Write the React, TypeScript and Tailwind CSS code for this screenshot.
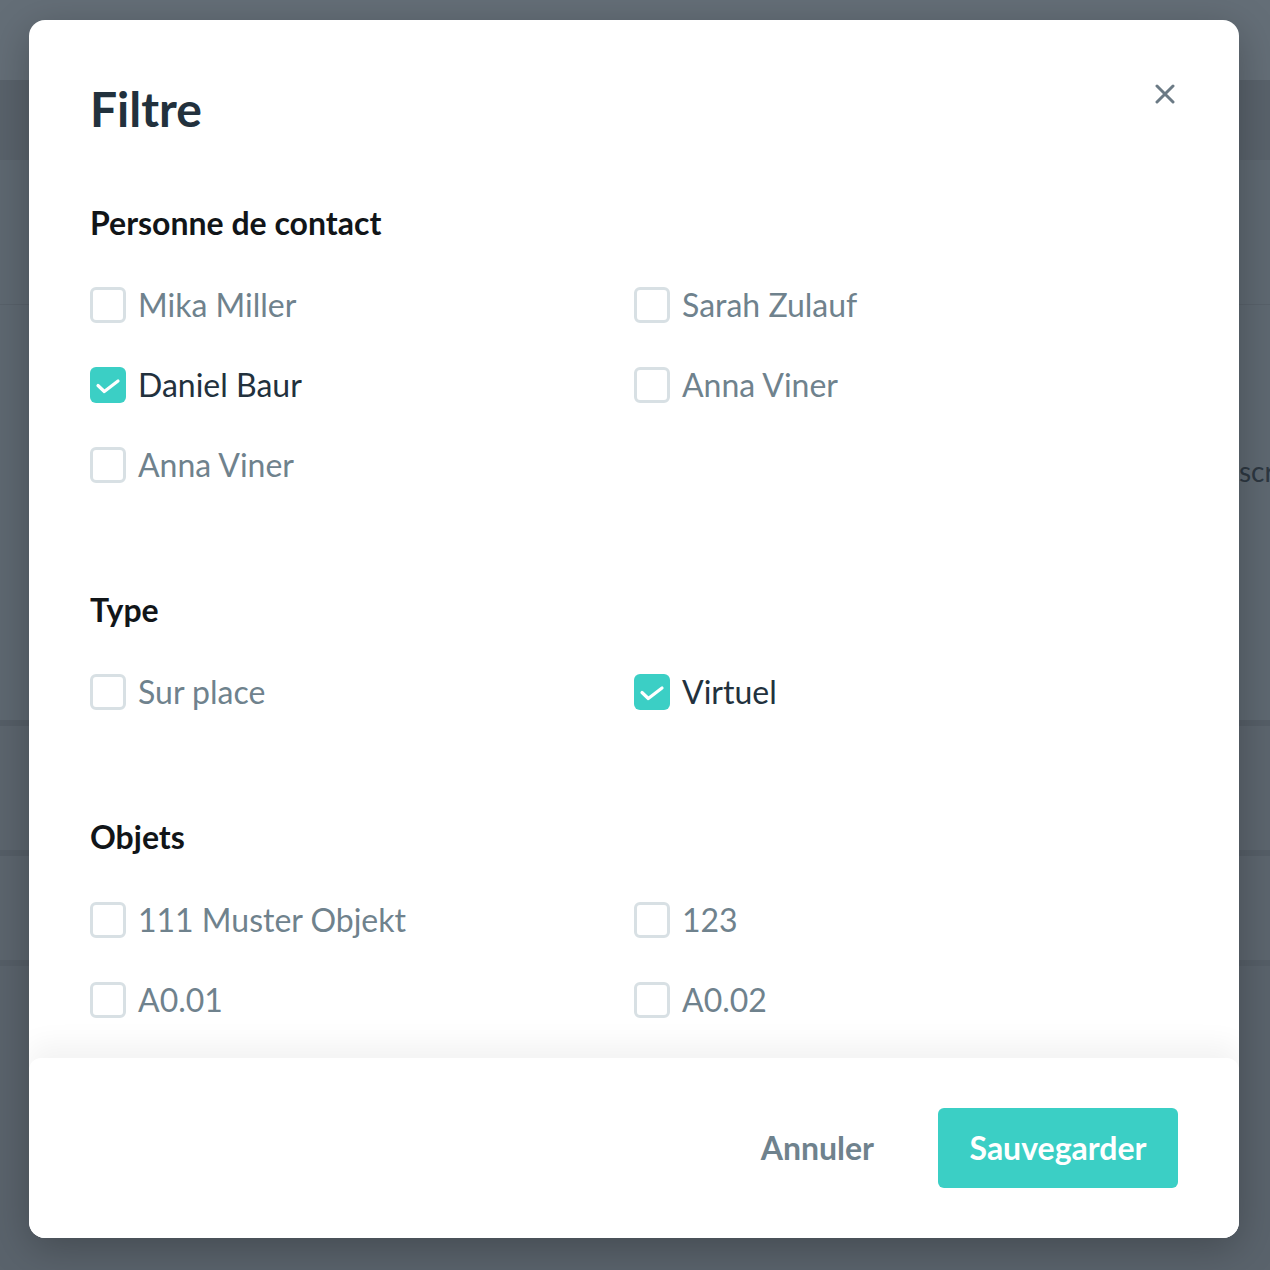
import React from 'react';

type Option = { label: string; checked?: boolean };

const sections: { title: string; options: Option[] }[] = [
  {
    title: 'Personne de contact',
    options: [
      { label: 'Mika Miller' },
      { label: 'Sarah Zulauf' },
      { label: 'Daniel Baur', checked: true },
      { label: 'Anna Viner' },
      { label: 'Anna Viner' },
    ],
  },
  {
    title: 'Type',
    options: [{ label: 'Sur place' }, { label: 'Virtuel', checked: true }],
  },
  {
    title: 'Objets',
    options: [
      { label: '111 Muster Objekt' },
      { label: '123' },
      { label: 'A0.01' },
      { label: 'A0.02' },
    ],
  },
];

function Checkbox({ checked }: { checked?: boolean }) {
  if (checked) {
    return (
      <span className="flex h-[36px] w-[36px] shrink-0 items-center justify-center rounded-[6px] bg-[#3bcfc5]">
        <svg width="36" height="36" viewBox="0 0 36 36" fill="none">
          <path
            d="M8 18.5 14.3 24.5 28 14"
            stroke="white"
            strokeWidth="3.2"
            strokeLinecap="round"
            strokeLinejoin="round"
          />
        </svg>
      </span>
    );
  }
  return (
    <span className="h-[36px] w-[36px] shrink-0 rounded-[6px] border-[3px] border-[#d8e0e4] bg-white" />
  );
}

function FilterOption({ option }: { option: Option }) {
  return (
    <label className="flex h-[80px] items-center gap-3">
      <Checkbox checked={option.checked} />
      <span
        className={`text-[32px] leading-none ${
          option.checked ? 'text-[#22313d]' : 'text-[#6f828d]'
        }`}
      >
        {option.label}
      </span>
    </label>
  );
}

function Backdrop() {
  return (
    <div className="flex h-full w-full flex-col bg-[#5b646d]">
      <div className="h-[80px] shrink-0 bg-[#646e77]" />
      <div className="h-[80px] shrink-0 bg-[#59626b]" />
      <div className="h-[145px] shrink-0 border-b border-[#58616a] bg-[#5e6871]" />
      <div className="h-[415px] shrink-0 overflow-hidden bg-[#5e6871] pl-[1239px] pt-[152px]">
        <span className="block whitespace-nowrap text-[28px] leading-none text-[#2d3741]">scr</span>
      </div>
      <div className="h-[130px] shrink-0 border-t-[6px] border-[#555e67] bg-[#5c656e]" />
      <div className="h-[110px] shrink-0 border-t-[6px] border-[#555e67] bg-[#5c656e]" />
      <div className="flex-1 border-t-[6px] border-[#555e67] bg-[#5a636c]" />
    </div>
  );
}

export default function App() {
  return (
    <div
      className="relative h-[1270px] w-[1270px] overflow-hidden"
      style={{ fontFamily: 'Lato, "Noto Sans", sans-serif' }}
    >
      <Backdrop />

      <div className="absolute left-[29px] top-[20px] flex h-[1218px] w-[1210px] flex-col overflow-hidden rounded-2xl bg-white shadow-[0_10px_40px_rgba(0,0,0,0.25)]">
        <div className="flex-1 overflow-hidden px-[61px] pt-[60px]">
          <div className="flex items-start justify-between">
            <h1 className="text-[48px] font-bold leading-[1.2] text-[#22313d]">Filtre</h1>
            <button className="mr-[3px] mt-[4px] text-[#6b7a85]" aria-label="Fermer">
              <svg width="20" height="20" viewBox="0 0 20 20" fill="none">
                <path
                  d="M2 2 18 18M18 2 2 18"
                  stroke="currentColor"
                  strokeWidth="3"
                  strokeLinecap="round"
                />
              </svg>
            </button>
          </div>

          <div className="mt-[66px] flex flex-col gap-[86px]">
            {sections.map((section) => (
              <div key={section.title}>
                <h2 className="text-[32px] font-bold leading-[1.2] text-[#111518]">
                  {section.title}
                </h2>
                <div className="mt-[23px] grid grid-cols-2">
                  {section.options.map((option, i) => (
                    <FilterOption key={i} option={option} />
                  ))}
                </div>
              </div>
            ))}
          </div>
        </div>

        <div className="relative z-10 flex h-[180px] shrink-0 items-center justify-end gap-16 rounded-t-xl bg-white pr-[61px] shadow-[0_-14px_28px_rgba(0,0,0,0.05)]">
          <button className="text-[32px] font-bold text-[#6f828d]">Annuler</button>
          <button className="h-[80px] w-[240px] rounded-[6px] bg-[#3bcfc5] text-[32px] font-bold text-white">
            Sauvegarder
          </button>
        </div>
      </div>
    </div>
  );
}
